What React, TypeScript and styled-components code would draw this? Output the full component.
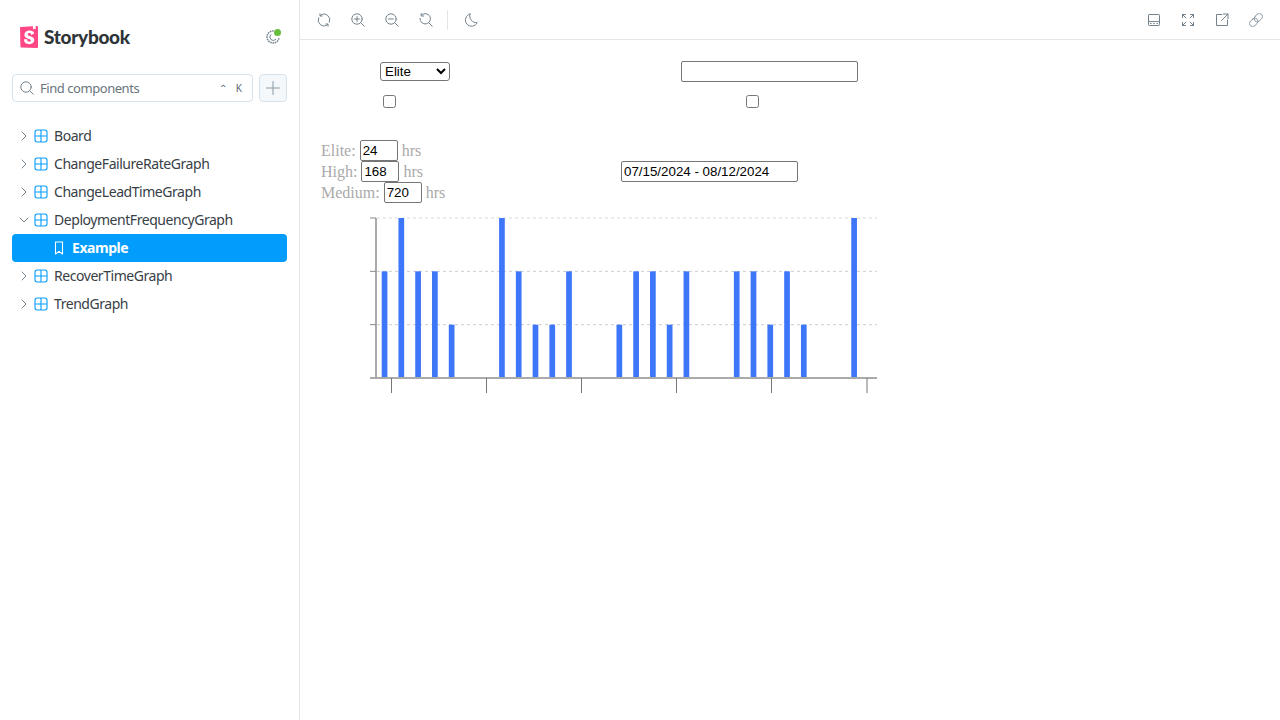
import React from "react";
import styled, { createGlobalStyle } from "styled-components";

const GlobalStyle = createGlobalStyle`
  html, body {
    margin: 0;
    padding: 0;
    background: #fff;
  }
  #root {
    height: 720px;
  }
`;

const Shell = styled.div`
  display: flex;
  width: 1280px;
  height: 720px;
  overflow: hidden;
`;

const Sidebar = styled.aside`
  width: 300px;
  flex: none;
  box-sizing: border-box;
  padding: 16px 12px 0;
  border-right: 1px solid #e3e6e8;
  font-family: "Noto Sans", sans-serif;
`;

const Brand = styled.div`
  display: flex;
  align-items: center;
  justify-content: space-between;
  height: 42px;
  padding: 0 7px 0 8px;
`;

const Logo = styled.div`
  display: flex;
  align-items: center;
  gap: 6px;
`;

const LogoText = styled.span`
  margin-top: -2px;
  font-family: "Lato", sans-serif;
  font-weight: 900;
  font-size: 19px;
  letter-spacing: -0.3px;
  color: #2e3438;
`;

const StatusButton = styled.span`
  position: relative;
  display: flex;
  width: 14px;
  height: 14px;
`;

const StatusDot = styled.span`
  position: absolute;
  top: -1px;
  right: -1px;
  width: 7px;
  height: 7px;
  border-radius: 50%;
  background: #66bf3c;
`;

const SearchRow = styled.div`
  display: flex;
  gap: 6px;
  margin-top: 16px;
`;

const SearchBox = styled.div`
  display: flex;
  align-items: center;
  flex: 1;
  box-sizing: border-box;
  height: 28px;
  padding: 0 10px 0 7px;
  border: 1px solid #d5e3ee;
  border-radius: 4px;
  background: #fff;
`;

const SearchLabel = styled.span`
  flex: 1;
  margin-left: 6px;
  font-size: 13px;
  letter-spacing: -0.45px;
  color: #69747c;
`;

const Shortcut = styled.span`
  display: flex;
  gap: 9px;
  font-size: 10px;
  font-weight: 400;
  color: #5c6870;
`;

const AddButton = styled.div`
  display: flex;
  align-items: center;
  justify-content: center;
  width: 28px;
  height: 28px;
  box-sizing: border-box;
  border: 1px solid #d5e3ee;
  border-radius: 4px;
  background: #f4f8fb;
`;

const Tree = styled.ul`
  list-style: none;
  margin: 20px 0 0;
  padding: 0;
`;

const TreeRow = styled.li<{ $selected?: boolean }>`
  display: flex;
  align-items: center;
  height: 28px;
  padding-left: ${(p) => (p.$selected ? "41px" : "7px")};
  border-radius: 4px;
  background: ${(p) => (p.$selected ? "#029cfd" : "transparent")};
  color: ${(p) => (p.$selected ? "#fff" : "#384046")};
  font-size: 14px;
  font-weight: ${(p) => (p.$selected ? 700 : 400)};
  letter-spacing: -0.45px;
`;

const TreeLabel = styled.span`
  margin-top: -2px;
`;

const Chevron = styled.svg`
  flex: none;
  width: 10px;
  height: 10px;
  margin-right: 5px;
`;

const ComponentIcon = styled.svg`
  flex: none;
  width: 14px;
  height: 14px;
  margin-right: 6px;
`;

const BookmarkIcon = styled.svg`
  flex: none;
  width: 12px;
  height: 14px;
  margin-right: 7px;
`;

const Main = styled.main`
  flex: 1;
  min-width: 0;
  display: flex;
  flex-direction: column;
`;

const Toolbar = styled.header`
  display: flex;
  align-items: center;
  justify-content: space-between;
  flex: none;
  box-sizing: border-box;
  height: 40px;
  padding: 0 10px;
  border-bottom: 1px solid #e3e6e8;
`;

const ToolGroup = styled.div`
  display: flex;
  align-items: center;
  gap: 6px;
`;

const ToolButton = styled.span`
  display: flex;
  align-items: center;
  justify-content: center;
  width: 28px;
  height: 28px;
`;

const ToolDivider = styled.span`
  width: 1px;
  height: 20px;
  margin: 0 3px 0 1px;
  background: #e3e6e8;
`;

const Preview = styled.div`
  padding: 21px 0 0 21px;
  font-family: "Liberation Serif", serif;
  font-size: 16px;
  color: #aaa;
`;

const Filters = styled.div`
  display: grid;
  grid-template-columns: 360px 380px;
  width: 740px;
  row-gap: 9px;
`;

const FilterCell = styled.div<{ $inset: number }>`
  display: flex;
  align-items: center;
  height: 21px;
  padding-left: ${(p) => p.$inset}px;
`;

const NativeSelect = styled.select`
  width: 70px;
  height: 19px;
  box-sizing: border-box;
  border: 1px solid #767676;
  border-radius: 3px;
  background: #fff;
  font-family: "Liberation Sans", sans-serif;
  font-size: 13.33px;
`;

const NativeInput = styled.input<{ $width: number }>`
  box-sizing: border-box;
  width: ${(p) => p.$width}px;
  height: 21px;
  padding: 1px 2px;
  border: 1px solid #767676;
  border-radius: 2px;
  font-family: "Liberation Sans", sans-serif;
  font-size: 13.33px;
`;

const NativeCheck = styled.input`
  margin: 0;
  width: 13px;
  height: 13px;
`;

const ThresholdRow = styled.div`
  display: flex;
  width: 740px;
  margin-top: 28px;
`;

const Thresholds = styled.div`
  width: 300px;
`;

const ThresholdLine = styled.div`
  display: flex;
  align-items: center;
  gap: 4px;
  height: 21px;
  font-size: 16px;
`;

const DateColumn = styled.div`
  padding-top: 21px;
`;

const Chart = styled.svg`
  display: block;
  margin-top: 13px;
`;

const stroke = "#73828c";

const Icon: React.FC<{ size?: number; color?: string; children: React.ReactNode }> = ({
  size = 14,
  color = stroke,
  children,
}) => (
  <svg
    width={size}
    height={size}
    viewBox="0 0 14 14"
    fill="none"
    stroke={color}
    strokeWidth="1"
    strokeLinecap="round"
    strokeLinejoin="round"
  >
    {children}
  </svg>
);

const StorybookMark = () => (
  <svg width="18" height="22" viewBox="0 0 18 22">
    <path d="M0 1.6 Q0 1 0.7 0.9 L17 0 Q18 0 18 1 V21 Q18 22 17 22 L1.2 21.4 Q0.4 21.3 0.4 20.6 Z" fill="#ff4785" />
    <path d="M13 0 L15.6 0 L15.8 3.6 L14.4 2.6 L13.1 3.7 Z" fill="#fff" />
    <path
      d="M14.2 7.6 C14 5.2 12 4.4 9.6 4.4 C6.4 4.4 4.4 6 4.4 8.7 C4.4 13.2 10.9 12.4 10.9 14.4 C10.9 15.4 10 15.6 9.2 15.6 C7.8 15.6 7.1 14.9 7.2 13.3 L4 13.3 C3.9 16.9 6.4 18.2 9.2 18.2 C12.2 18.2 14.3 16.7 14.3 14.1 C14.3 9.6 7.7 10.6 7.7 8.5 C7.7 7.4 8.7 7.1 9.5 7.1 C10.3 7.1 11.2 7.5 11.1 8.9 Z"
      fill="#fff"
    />
  </svg>
);

const GroupChevron: React.FC<{ open?: boolean }> = ({ open }) => (
  <Chevron viewBox="0 0 10 10" fill="none" stroke="#73828c" strokeWidth="1" strokeLinecap="round" strokeLinejoin="round">
    {open ? <path d="M1 3 L5 7 L9 3" /> : <path d="M3 1 L7 5 L3 9" />}
  </Chevron>
);

const TreeGroupIcon = () => (
  <ComponentIcon viewBox="0 0 14 14" fill="none" stroke="#029cfd" strokeWidth="1.1">
    <rect x="1" y="1" width="12" height="12" rx="2.2" />
    <path d="M7 1 V13 M1 7 H13" />
  </ComponentIcon>
);

const components: { name: string; open?: boolean; selected?: string }[] = [
  { name: "Board" },
  { name: "ChangeFailureRateGraph" },
  { name: "ChangeLeadTimeGraph" },
  { name: "DeploymentFrequencyGraph", open: true, selected: "Example" },
  { name: "RecoverTimeGraph" },
  { name: "TrendGraph" },
];

// deployments per day, one bar every 16.77px
const counts = [2, 3, 2, 2, 1, 0, 0, 3, 2, 1, 1, 2, 0, 0, 1, 2, 2, 1, 2, 0, 0, 2, 2, 1, 2, 1, 0, 0, 3];
const xTicks = [70.5, 165.5, 260.5, 355.5, 450.5, 546];

const DeploymentChart = () => {
  const baseY = 162;
  const unit = 160 / 3;
  return (
    <Chart width="560" height="180" viewBox="0 0 560 180">
      {[1, 2, 3].map((n) => (
        <line
          key={n}
          x1="56"
          x2="556"
          y1={baseY - n * unit}
          y2={baseY - n * unit}
          stroke={n === 3 ? "#d8d8d8" : "#ccc"}
          strokeDasharray="3 3"
        />
      ))}
      {counts.map((c, i) =>
        c > 0 ? <rect key={i} x={60.7 + i * 16.77} y={baseY - c * unit} width="5.7" height={c * unit} fill="#3e76f9" /> : null
      )}
      <line x1="55" x2="55" y1="2" y2={baseY} stroke="#aaa" strokeWidth="2" />
      {[0, 1, 2, 3].map((n) => (
        <line key={n} x1="49" x2="55" y1={baseY - n * unit} y2={baseY - n * unit} stroke="#888" />
      ))}
      <line x1="49" x2="556" y1={baseY} y2={baseY} stroke="#aaa" strokeWidth="2" />
      {xTicks.map((x) => (
        <line key={x} x1={x} x2={x} y1={baseY} y2="177" stroke="#777" />
      ))}
    </Chart>
  );
};

const App: React.FC = () => {
  return (
    <>
      <GlobalStyle />
      <Shell>
        <Sidebar>
          <Brand>
            <Logo>
              <StorybookMark />
              <LogoText>Storybook</LogoText>
            </Logo>
            <StatusButton>
              <Icon>
                <path d="M7.6 1 A6 6 0 1 0 13 7.6" strokeWidth="1.6" strokeDasharray="1.5 0.8" strokeLinecap="butt" />
                <path d="M4.8 4.6 A3.4 3.4 0 0 0 9.8 9.4" />
              </Icon>
              <StatusDot />
            </StatusButton>
          </Brand>
          <SearchRow>
            <SearchBox>
              <Icon>
                <circle cx="6" cy="6" r="5.2" />
                <path d="M10 10 L13.2 13.2" />
              </Icon>
              <SearchLabel>Find components</SearchLabel>
              <Shortcut>
                <span>⌃</span>
                <span>K</span>
              </Shortcut>
            </SearchBox>
            <AddButton>
              <Icon color="#8d9aa3">
                <path d="M7 0.5 V13.5 M0.5 7 H13.5" />
              </Icon>
            </AddButton>
          </SearchRow>
          <Tree>
            {components.map((c) => (
              <React.Fragment key={c.name}>
                <TreeRow>
                  <GroupChevron open={c.open} />
                  <TreeGroupIcon />
                  <TreeLabel>{c.name}</TreeLabel>
                </TreeRow>
                {c.selected && (
                  <TreeRow $selected>
                    <BookmarkIcon viewBox="0 0 12 14" fill="none" stroke="#fff" strokeWidth="1.1" strokeLinejoin="round">
                      <path d="M2.5 1 H9.5 V13 L6 10.4 L2.5 13 Z" />
                    </BookmarkIcon>
                    <TreeLabel>{c.selected}</TreeLabel>
                  </TreeRow>
                )}
              </React.Fragment>
            ))}
          </Tree>
        </Sidebar>
        <Main>
          <Toolbar>
            <ToolGroup>
              <ToolButton>
                <Icon>
                  <path d="M3.2 2.6 A5.8 5.8 0 0 1 12.4 9.2 M10.8 11.4 A5.8 5.8 0 0 1 1.6 4.8" />
                  <path d="M3 0.8 V3 H5.2 M11 13.2 V11 H8.8" />
                </Icon>
              </ToolButton>
              <ToolButton>
                <Icon>
                  <circle cx="6" cy="6" r="5.2" />
                  <path d="M10 10 L13.2 13.2 M6 3.6 V8.4 M3.6 6 H8.4" />
                </Icon>
              </ToolButton>
              <ToolButton>
                <Icon>
                  <circle cx="6" cy="6" r="5.2" />
                  <path d="M10 10 L13.2 13.2 M3.6 6 H8.4" />
                </Icon>
              </ToolButton>
              <ToolButton>
                <Icon>
                  <path d="M2.6 2 A5.2 5.2 0 1 1 1 5.4" />
                  <path d="M2.2 0.6 V3 H4.6 M10 10 L13.2 13.2" />
                </Icon>
              </ToolButton>
              <ToolDivider />
              <ToolButton>
                <Icon>
                  <path d="M6 1 A6.2 6.2 0 1 0 13.2 9.6 A6.6 6.6 0 0 1 6 1 Z" />
                </Icon>
              </ToolButton>
            </ToolGroup>
            <ToolGroup>
              <ToolButton>
                <Icon>
                  <rect x="1.5" y="1.5" width="11" height="11" rx="0.8" />
                  <path d="M1.5 8.6 H12.5 M3.4 10.6 H4.2 M6.6 10.6 H7.4 M9.8 10.6 H10.6" />
                </Icon>
              </ToolButton>
              <ToolButton>
                <Icon>
                  <path d="M1.5 4.5 V1.5 H4.5 M1.5 1.5 L5 5 M9.5 1.5 H12.5 V4.5 M12.5 1.5 L9 5 M1.5 9.5 V12.5 H4.5 M1.5 12.5 L5 9 M12.5 9.5 V12.5 H9.5 M12.5 12.5 L9 9" />
                </Icon>
              </ToolButton>
              <ToolButton>
                <Icon>
                  <path d="M7 1.5 H1.5 V12.5 H12.5 V7 M8.5 1 H13 V5.5 M13 1 L6.5 7.5" />
                </Icon>
              </ToolButton>
              <ToolButton>
                <Icon color="#8d9aa3">
                  <path d="M6 3.4 L8.2 1.4 A2.5 2.5 0 0 1 12.6 5.8 L10.2 8 A2.5 2.5 0 0 1 6 3.4 Z M3.8 6 L1.4 8.2 A2.5 2.5 0 0 0 5.8 12.6 L8 10.6 A2.5 2.5 0 0 0 3.8 6 Z" />
                </Icon>
              </ToolButton>
            </ToolGroup>
          </Toolbar>
          <Preview>
            <Filters>
              <FilterCell $inset={59}>
                <NativeSelect defaultValue="Elite">
                  <option>Elite</option>
                  <option>High</option>
                  <option>Medium</option>
                </NativeSelect>
              </FilterCell>
              <FilterCell $inset={0}>
                <NativeInput type="text" $width={177} />
              </FilterCell>
              <FilterCell $inset={62}>
                <NativeCheck type="checkbox" />
              </FilterCell>
              <FilterCell $inset={65}>
                <NativeCheck type="checkbox" />
              </FilterCell>
            </Filters>
            <ThresholdRow>
              <Thresholds>
                <ThresholdLine>
                  Elite: <NativeInput defaultValue="24" $width={38} /> hrs
                </ThresholdLine>
                <ThresholdLine>
                  High: <NativeInput defaultValue="168" $width={38} /> hrs
                </ThresholdLine>
                <ThresholdLine>
                  Medium: <NativeInput defaultValue="720" $width={38} /> hrs
                </ThresholdLine>
              </Thresholds>
              <DateColumn>
                <NativeInput defaultValue="07/15/2024 - 08/12/2024" $width={177} />
              </DateColumn>
            </ThresholdRow>
            <DeploymentChart />
          </Preview>
        </Main>
      </Shell>
    </>
  );
};

export default App;
